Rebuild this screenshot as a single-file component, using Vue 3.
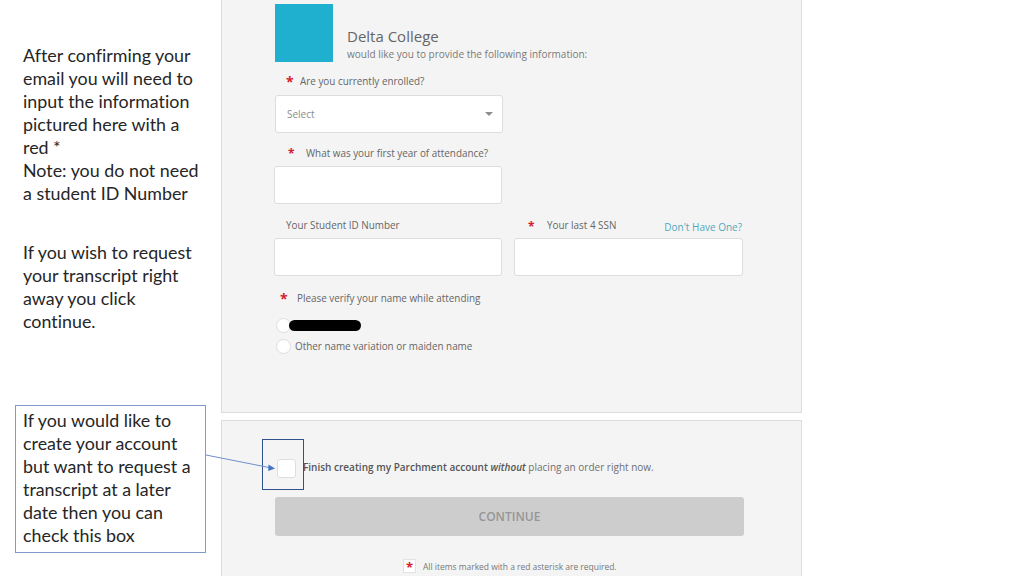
<script setup>
const notes = ['After confirming your', 'email you will need to', 'input the information', 'pictured here with a', 'red *', 'Note: you do not need', 'a student ID Number']
const notes2 = ['If you wish to request', 'your transcript right', 'away you click', 'continue.']
const callout = ['If you would like to', 'create your account', 'but want to request a', 'transcript at a later', 'date then you can', 'check this box']
</script>

<template>
  <div class="page">
    <aside class="side">
      <div class="note first"><div v-for="l in notes" :key="l">{{ l }}</div></div>
      <div class="note second"><div v-for="l in notes2" :key="l">{{ l }}</div></div>
      <div class="note callout"><div v-for="l in callout" :key="l">{{ l }}</div></div>
    </aside>

    <main class="main">
      <section class="panel top">
        <header class="head">
          <div class="logo"></div>
          <div class="head-text">
            <div class="title">Delta College</div>
            <div class="sub">would like you to provide the following information:</div>
          </div>
        </header>

        <div class="label l1"><span class="star">*</span>Are you currently enrolled?</div>
        <div class="field select">
          <span>Select</span>
          <i class="caret"></i>
        </div>

        <div class="label l2"><span class="star small">*</span>What was your first year of attendance?</div>
        <div class="field year"></div>

        <div class="pair-labels">
          <div class="label id">Your Student ID Number</div>
          <div class="label ssn"><span class="star small">*</span>Your last 4 SSN</div>
          <a class="dont">Don't Have One?</a>
        </div>
        <div class="pair">
          <div class="field"></div>
          <div class="field wide"></div>
        </div>

        <div class="label l3"><span class="star">*</span>Please verify your name while attending</div>
        <div class="radio-row r1"><span class="radio"></span><span class="redact"></span></div>
        <div class="radio-row r2"><span class="radio"></span><span>Other name variation or maiden name</span></div>
      </section>

      <section class="panel bottom">
        <div class="check-row">
          <span class="check"></span>
          <span class="check-text"><span class="dark">Finish creating my Parchment account <em>without</em></span> placing an order right now.</span>
        </div>
        <div class="continue">CONTINUE</div>
        <div class="req"><span class="req-box">*</span><span>All items marked with a red asterisk are required.</span></div>
      </section>
    </main>

    <div class="highlight"></div>
    <svg class="arrow" width="1024" height="576" viewBox="0 0 1024 576">
      <line x1="206" y1="455" x2="269" y2="467.5" stroke="#6f8fc9" stroke-width="1" />
      <path d="M275 468.4 L268.5 464.6 L268.2 471 Z" fill="#4472c4" />
    </svg>
  </div>
</template>

<style scoped>
.page {
  position: relative;
  display: flex;
  width: 1024px;
  height: 576px;
  overflow: hidden;
  background: #fff;
  font-family: "Open Sans", sans-serif;
}
.side {
  width: 221px;
  flex: none;
  font-family: Lato, sans-serif;
  font-size: 17.85px;
  line-height: 23px;
  font-variant-ligatures: none;
  color: #262626;
}
.note { padding-left: 23px; }
.first { margin-top: 44px; }
.second { margin-top: 36px; }
.callout {
  box-sizing: border-box;
  width: 191px;
  height: 148px;
  margin: 72px 0 0 15px;
  padding: 3px 0 0 7px;
  border: 1px solid #7f9acb;
}
.main {
  width: 581px;
  flex: none;
}
.panel {
  box-sizing: border-box;
  width: 581px;
  background: #f4f4f4;
  border: 1px solid #dcdcdc;
  padding-left: 52px;
  color: #6a6a6a;
}
.top {
  height: 414px;
  margin-top: -1px;
  border-top: 0;
  padding-top: 5px;
}
.bottom {
  height: 170px;
  margin-top: 7px;
  border-bottom: 0;
}
.head { display: flex; align-items: flex-end; }
.logo {
  width: 58px;
  height: 58px;
  margin-left: 1px;
  background: #1fb0cf;
  flex: none;
}
.head-text { margin-left: 14px; }
.title {
  font-size: 15px;
  line-height: 20px;
  color: #666;
}
.sub {
  font-size: 10px;
  line-height: 14px;
  margin-top: 1.5px;
  margin-bottom: 1px;
  color: #7a7a7a;
}
.label {
  display: flex;
  align-items: center;
  font-size: 9.9px;
  line-height: 14px;
  color: #666;
}
.star {
  color: #d3202f;
  font-size: 14px;
  width: 14px;
  text-align: left;
  font-weight: 700;
  line-height: 14px;
  padding-top: 3px;
}
.star.small { font-size: 12px; width: 19px; }
.l1 { margin: 10px 0 0 12px; }
.l2 { margin: 11px 0 0 14px; }
.l2 .star.small { width: 18px; }
.l3 { margin: 13px 0 0 6px; }
.l3 .star { width: 17px; }
.field {
  box-sizing: border-box;
  width: 228px;
  height: 38px;
  background: #fff;
  border: 1px solid #dddddd;
  border-radius: 3px;
}
.select {
  display: flex;
  align-items: center;
  justify-content: space-between;
  width: 228px;
  margin: 6px 0 0 1px;
  padding: 0 9px 0 11px;
  font-size: 10px;
  color: #8c8c8c;
}
.caret {
  width: 0;
  height: 0;
  border-left: 4px solid transparent;
  border-right: 4px solid transparent;
  border-top: 4px solid #8d8d8d;
}
.year { margin-top: 5px; }
.pair-labels {
  display: flex;
  align-items: center;
  width: 468px;
  margin-top: 14px;
  height: 14px;
}
.id { margin-left: 12px; width: 242px; }
.dont {
  margin-left: auto;
  font-size: 10px;
  padding-top: 3px;
  color: #4fa9bc;
}
.pair {
  display: flex;
  gap: 12px;
  margin-top: 6px;
}
.wide { width: 229px; }
.radio-row {
  display: flex;
  align-items: center;
  font-size: 9.9px;
  color: #666;
}
.r1 { margin-top: 11px; height: 16px; }
.r2 { margin-top: 5px; height: 16px; }
.radio {
  width: 15px;
  height: 15px;
  flex: none;
  box-sizing: border-box;
  background: #fff;
  border: 1px solid #dedede;
  border-radius: 50%;
  margin: 0 4px 0 2px;
}
.redact {
  width: 72px;
  height: 11px;
  margin-left: -6px;
  background: #000;
  border-radius: 6px;
}
.check-row {
  display: flex;
  align-items: center;
  height: 19px;
  margin-top: 38px;
  font-size: 10px;
  line-height: 18px;
}
.check {
  box-sizing: border-box;
  width: 19px;
  height: 19px;
  flex: none;
  background: #fff;
  border: 1px solid #dedede;
  border-radius: 3px;
  margin-left: 3px;
}
.check-text { margin: 0 0 3px 7px; color: #707070; }
.dark { color: #555; font-weight: 600; }
.dark em { font-weight: 600; }
.continue {
  width: 469px;
  height: 39px;
  margin: 19px 0 0 1px;
  line-height: 39px;
  text-align: center;
  background: #cdcdcd;
  border-radius: 3px;
  font-size: 12px;
  font-weight: 600;
  color: #969696;
}
.req {
  display: flex;
  align-items: center;
  margin: 23px 0 0 129px;
  font-size: 8.45px;
  color: #777;
}
.req-box {
  box-sizing: border-box;
  width: 13px;
  height: 14px;
  padding-top: 2px;
  margin-right: 7px;
  background: #fff;
  border: 1px solid #e2e2e2;
  color: #d3202f;
  font-size: 13px;
  font-weight: 700;
  line-height: 10px;
  text-align: center;
}
.highlight {
  position: absolute;
  left: 262px;
  top: 439px;
  box-sizing: border-box;
  width: 42px;
  height: 51px;
  border: 1px solid #2f528f;
}
.arrow {
  position: absolute;
  left: 0;
  top: 0;
  pointer-events: none;
}
</style>
